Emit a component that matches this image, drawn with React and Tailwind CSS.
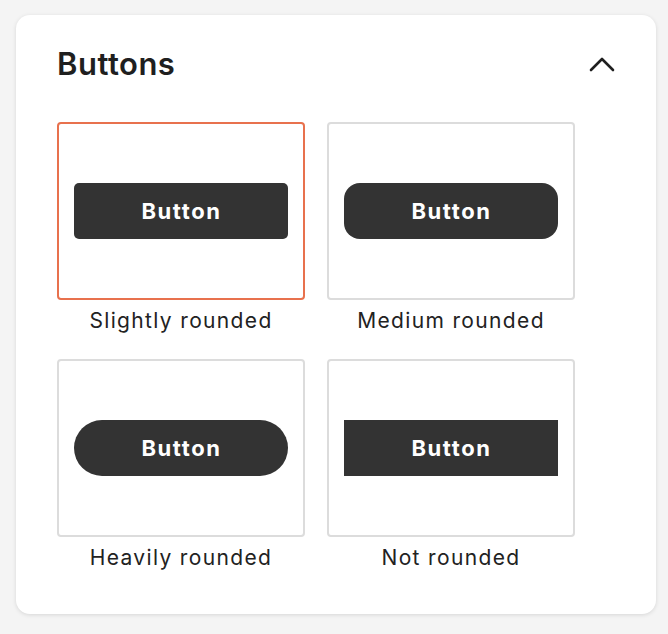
import { useState } from "react";

const OPTIONS = [
  { id: "slight", label: "Slightly rounded", radius: "rounded-[5px]" },
  { id: "medium", label: "Medium rounded", radius: "rounded-[16px]" },
  { id: "heavy", label: "Heavily rounded", radius: "rounded-full" },
  { id: "none", label: "Not rounded", radius: "rounded-none" }
];

export default function App() {
  const [selected, setSelected] = useState("slight");

  return (
    <main
      className="min-h-screen bg-[#f4f4f4] px-4 pt-[15px] text-[#222]"
      style={{ fontFamily: "Inter, 'Noto Sans', sans-serif" }}
    >
      <section className="w-[640px] rounded-[14px] bg-white pb-[42px] pl-[41px] pr-[40px] pt-[31px] shadow-[0_1px_4px_rgba(0,0,0,0.12)]">
        <header className="flex items-center justify-between">
          <h2 className="text-[31px] font-semibold leading-9 tracking-[0.5px] text-[#1f1f1f]">Buttons</h2>
          <button type="button" className="mr-[-2px] flex h-8 w-8 items-center justify-center text-[#1f1f1f]">
            <svg width="26" height="15" viewBox="0 0 26 15" fill="none">
              <polyline points="2,13 13,2 24,13" stroke="currentColor" strokeWidth="2.6" strokeLinecap="round" strokeLinejoin="round" />
            </svg>
          </button>
        </header>

        <div className="mt-10 grid grid-cols-[248px_248px] gap-x-[22px] gap-y-[24px]">
          {OPTIONS.map((opt) => {
            const isActive = selected === opt.id;
            return (
              <div key={opt.id} className="flex flex-col items-center">
                <button
                  type="button"
                  onClick={() => setSelected(opt.id)}
                  className={`flex h-[178px] w-[248px] items-center justify-center rounded-[4px] border-2 bg-white ${
                    isActive ? "border-[#e8714d]" : "border-[#dcdcdc]"
                  }`}
                >
                  <span
                    className={`flex h-[56px] w-[214px] items-center justify-center bg-[#333333] pl-[1px] text-[22px] font-bold tracking-[1.6px] text-white ${opt.radius}`}
                  >
                    Button
                  </span>
                </button>
                <p className="mt-[7px] text-[21px] leading-7 tracking-[1.35px] text-[#222]">{opt.label}</p>
              </div>
            );
          })}
        </div>
      </section>
    </main>
  );
}
